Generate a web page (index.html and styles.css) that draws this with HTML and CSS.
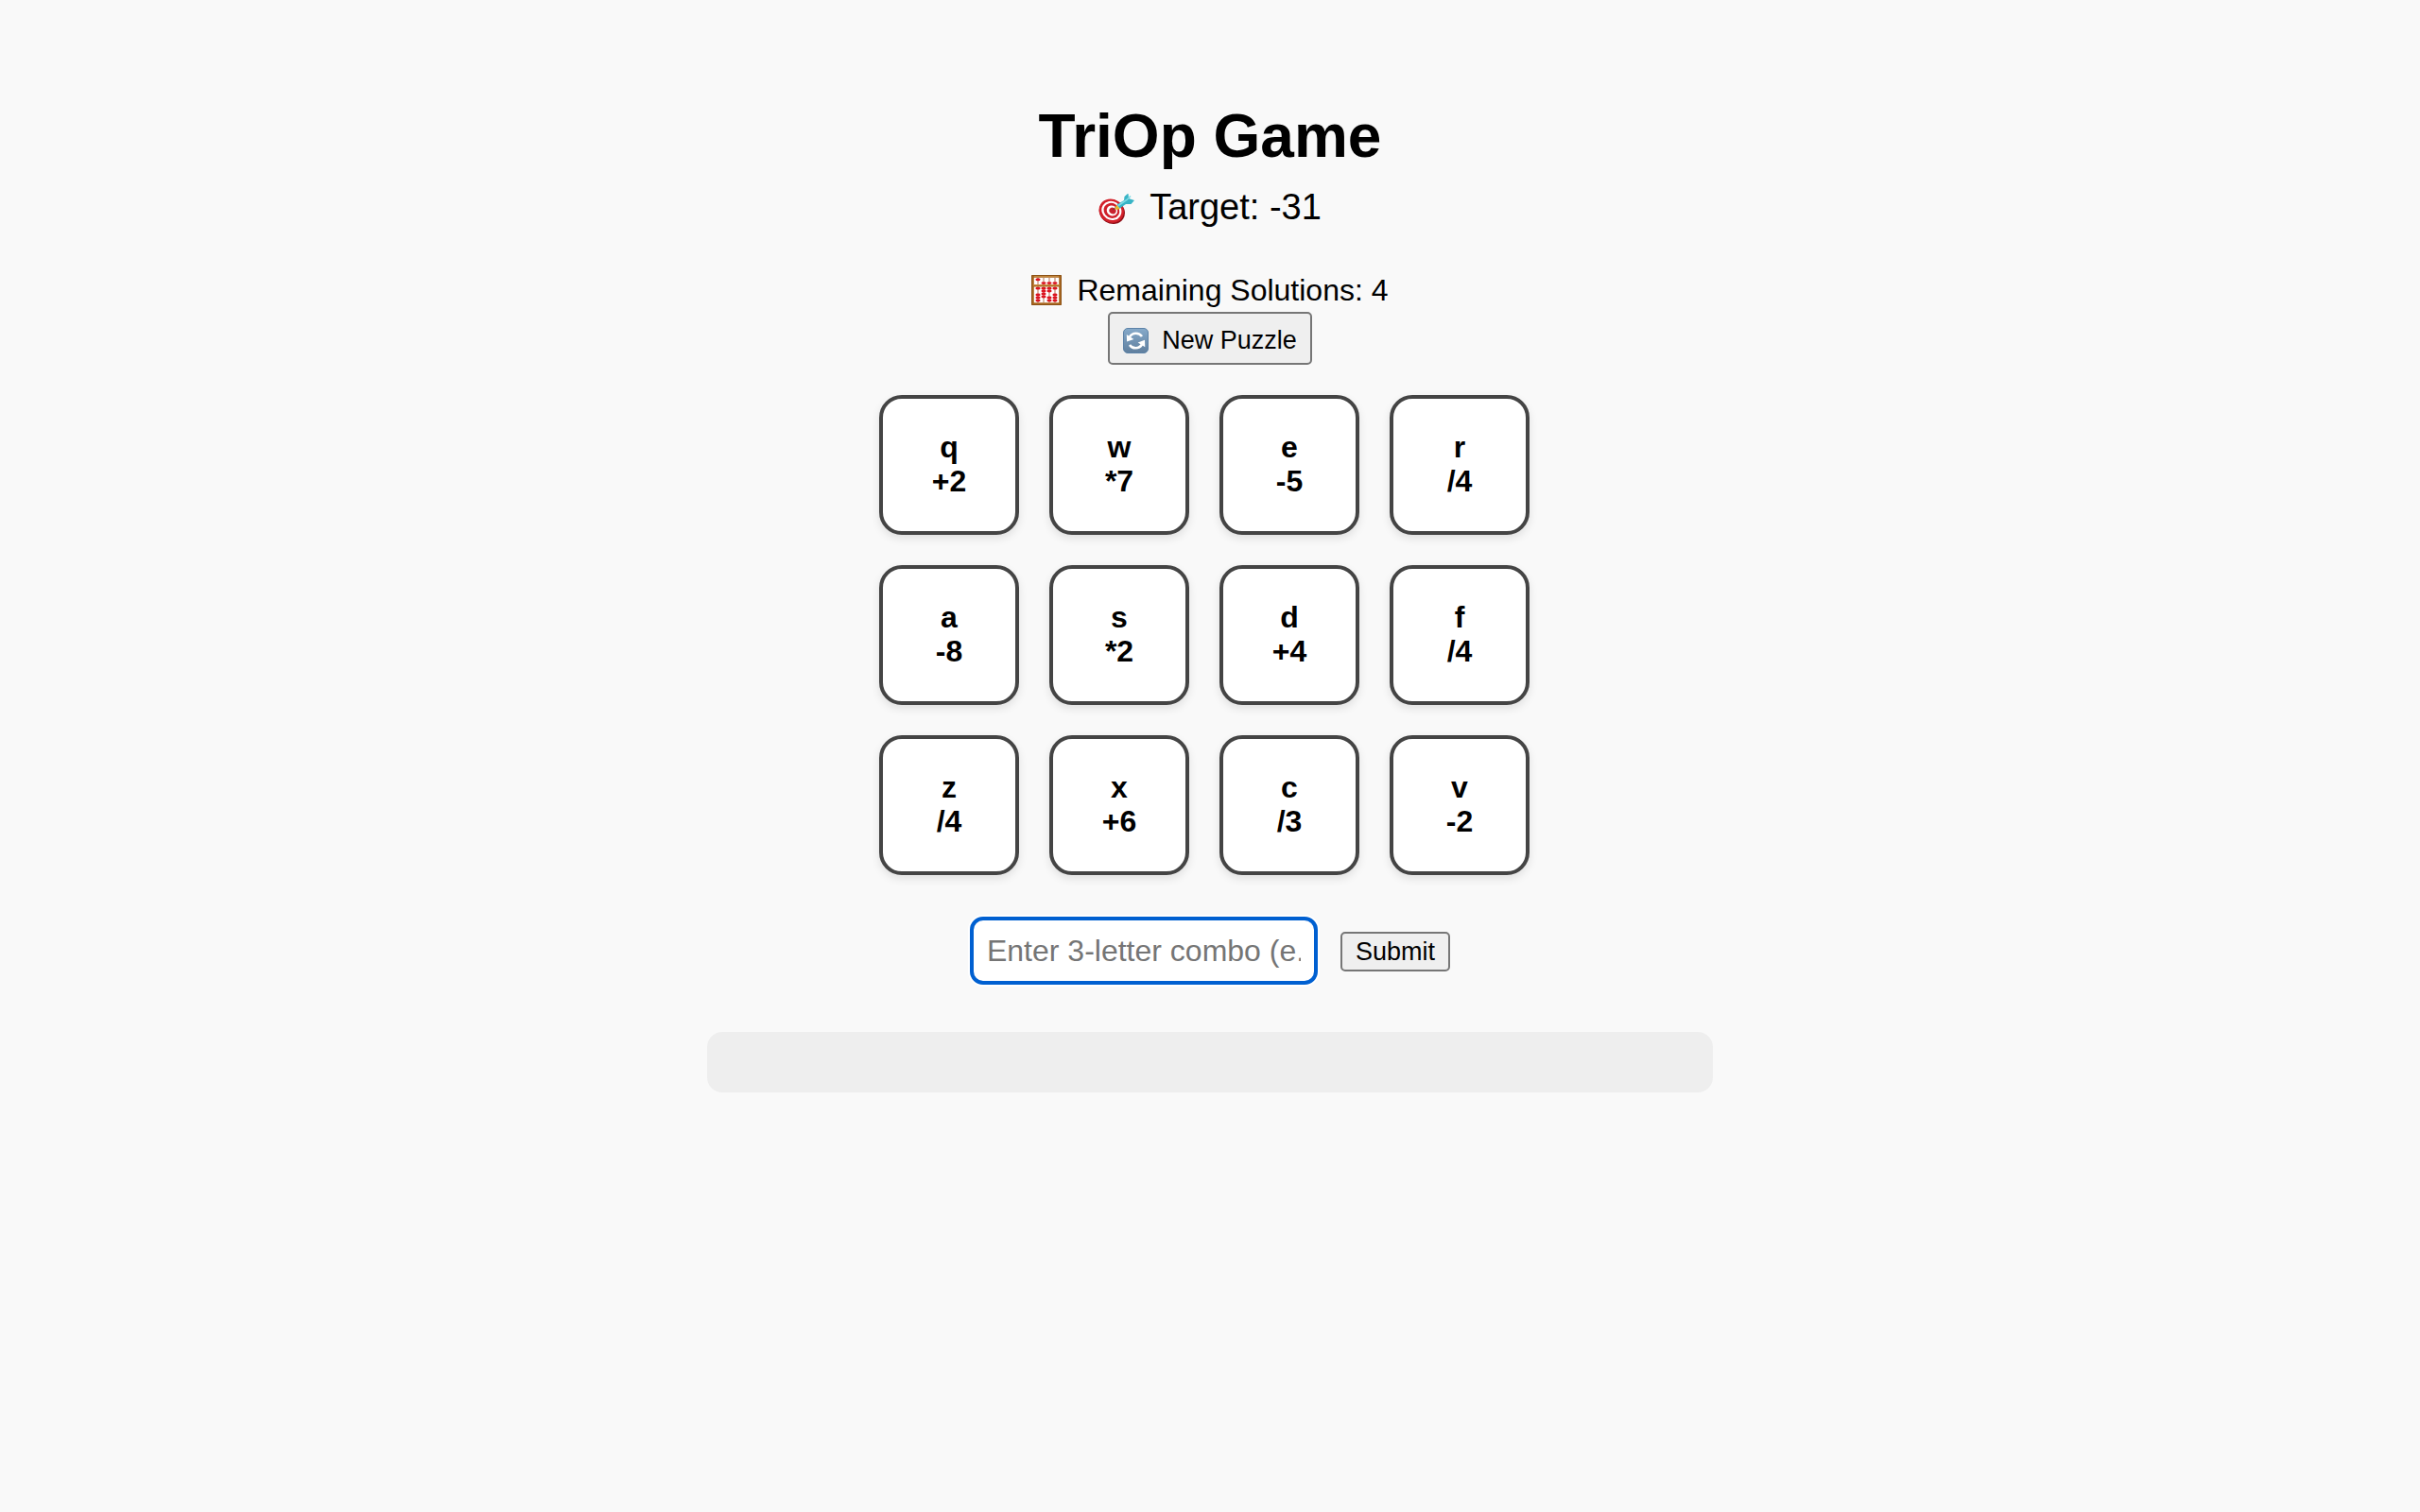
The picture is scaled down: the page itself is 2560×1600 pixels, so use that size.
FILE: index.html
```html
<!DOCTYPE html>
<html lang="en">
<head>
<meta charset="utf-8">
<title>TriOp Game</title>
<link rel="stylesheet" href="styles.css">
</head>
<body>
<main class="game">
  <h1 class="title">TriOp Game</h1>
  <p class="target">
    <svg class="icon-target" viewBox="0 0 38 32" aria-hidden="true">
      <g transform="rotate(32 13.500 18.500)">
        <ellipse cx="14.500" cy="18.500" rx="14" ry="12.500" fill="#8f1018"/>
        <ellipse cx="13.500" cy="18" rx="13.500" ry="12.300" fill="#d3202a"/>
        <ellipse cx="13.500" cy="17.800" rx="10.800" ry="9.800" fill="#fff"/>
        <ellipse cx="13.500" cy="17.800" rx="8.600" ry="7.800" fill="#cf202a"/>
        <ellipse cx="14" cy="17.500" rx="5.900" ry="5.300" fill="#fff"/>
        <ellipse cx="14.500" cy="17.300" rx="3.700" ry="3.300" fill="#c8222d"/>
      </g>
      <path d="M15 17l5-4" stroke="#6b3a3a" stroke-width="1"/>
      <path d="M17.500 16l1.500-4 4 3.500-3 1.500z" fill="#e9b928"/>
      <path d="M19.500 11.500l7.500-4.500.500-4 4-3.500.500 5.500 6 2-3.500 4-5.500 0-6.500 4.500z" fill="#38b4c6"/>
      <path d="M21 12.500l9-6 4-4" stroke="#7fdbe4" stroke-width="1.600" fill="none"/>
    </svg>
    <span>Target: -31</span>
  </p>
  <p class="remaining">
    <svg class="icon-abacus" viewBox="0 0 32 32" aria-hidden="true">
      <path fill="#fff" d="M1 1h30v30H1z"/>
      <path d="M7 3v26M13 3v26M19 3v26M25 3v26" stroke="#c58b72" stroke-width="1.200"/>
      <g fill="#dc1420">
        <ellipse cx="7" cy="4.800" rx="2.600" ry="1.500"/>
        <ellipse cx="13" cy="8.600" rx="2.600" ry="1.300"/>
        <ellipse cx="19" cy="8.600" rx="2.600" ry="1.300"/>
        <ellipse cx="25" cy="8.600" rx="2.600" ry="1.300"/>
        <ellipse cx="7" cy="14.200" rx="2.600" ry="1.400"/>
        <ellipse cx="13" cy="14.200" rx="2.600" ry="1.400"/>
        <ellipse cx="19" cy="14.200" rx="2.600" ry="1.400"/>
        <ellipse cx="25" cy="14.200" rx="2.600" ry="1.400"/>
        <ellipse cx="13" cy="17" rx="2.600" ry="1.400"/>
        <ellipse cx="19" cy="17" rx="2.600" ry="1.400"/>
        <ellipse cx="13" cy="20" rx="2.600" ry="1.400"/>
        <ellipse cx="7" cy="21" rx="2.600" ry="1.400"/>
        <ellipse cx="25" cy="21" rx="2.600" ry="1.400"/>
        <ellipse cx="13" cy="23" rx="2.600" ry="1.400"/>
        <ellipse cx="7" cy="24" rx="2.600" ry="1.400"/>
        <ellipse cx="19" cy="24" rx="2.600" ry="1.400"/>
        <ellipse cx="25" cy="24" rx="2.600" ry="1.400"/>
        <ellipse cx="7" cy="27" rx="2.600" ry="1.400"/>
        <ellipse cx="19" cy="27" rx="2.600" ry="1.400"/>
        <ellipse cx="25" cy="27" rx="2.600" ry="1.400"/>
      </g>
      <path d="M1.500 1.500h29v29h-29zM2 11.200h28" fill="none" stroke="#a9671f" stroke-width="2.600"/>
      <path d="M2 10.700h28M3 1.200h26" stroke="#d0944a" stroke-width="1"/>
      <path d="M.500.500h31v31H.500z" fill="none" stroke="#8c5217" stroke-width="1"/>
    </svg>
    <span>Remaining Solutions: 4</span>
  </p>
  <button class="button new-puzzle" type="button">
    <svg class="icon-refresh" viewBox="0 0 27 27" aria-hidden="true">
      <defs>
        <linearGradient id="tile-blue" x1="0" y1="0" x2="0" y2="1">
          <stop offset="0" stop-color="#86aaca"/>
          <stop offset="1" stop-color="#5f7e9d"/>
        </linearGradient>
      </defs>
      <rect x=".500" y=".500" width="26" height="26" rx="4.500" fill="url(#tile-blue)" stroke="#5d83a8"/>
      <path d="M7 9.500C10 4.500 17 4.500 20 9M20 17.500C17 22.500 10 22.500 7 18" fill="none" stroke="#fff" stroke-width="2.500"/>
      <path d="M3.800 7l.3 7.500 7.300-2.600zM23.300 20.200l-.3-7.500-7.300 2.800z" fill="#fff"/>
    </svg>
    <span>New Puzzle</span>
  </button>

  <div class="grid">
    <div class="tile"><span>q</span><span>+2</span></div>
    <div class="tile"><span>w</span><span>*7</span></div>
    <div class="tile"><span>e</span><span>-5</span></div>
    <div class="tile"><span>r</span><span>/4</span></div>
    <div class="tile"><span>a</span><span>-8</span></div>
    <div class="tile"><span>s</span><span>*2</span></div>
    <div class="tile"><span>d</span><span>+4</span></div>
    <div class="tile"><span>f</span><span>/4</span></div>
    <div class="tile"><span>z</span><span>/4</span></div>
    <div class="tile"><span>x</span><span>+6</span></div>
    <div class="tile"><span>c</span><span>/3</span></div>
    <div class="tile"><span>v</span><span>-2</span></div>
  </div>

  <form class="entry">
    <input class="combo" type="text" aria-label="Three-letter combo" placeholder="Enter 3-letter combo (e.g. qwe)">
    <button class="button submit" type="submit">Submit</button>
  </form>

  <div class="log"></div>
</main>
</body>
</html>
```

FILE: styles.css
```css
* {
  box-sizing: border-box;
}

body {
  margin: 0;
  background: #f9f9f9;
  color: #000;
  font-family: "Liberation Sans", Arial, Helvetica, sans-serif;
}

.game {
  display: flex;
  flex-direction: column;
  align-items: center;
  max-width: 1064px;
  margin: 0 auto;
  padding: 107px 0;
}

.title {
  margin: 0 0 16px;
  font-size: 64px;
  line-height: 74px;
}

.target,
.remaining {
  display: flex;
  align-items: center;
  gap: 16px;
  margin: 0;
}

.target {
  margin-bottom: 48px;
  font-size: 38px;
  line-height: 44px;
}

.remaining {
  margin-bottom: 5px;
  font-size: 32px;
  line-height: 36px;
}

.icon-target {
  width: 38px;
  height: 32px;
  margin-top: 3px;
}

.icon-abacus {
  width: 32px;
  height: 32px;
}

.icon-refresh {
  width: 27px;
  height: 27px;
}

.button {
  display: flex;
  align-items: center;
  gap: 14px;
  padding: 4px 14px 3px;
  border: 2px solid #767676;
  border-radius: 5px;
  background: #efefef;
  color: #000;
  font-family: inherit;
  font-size: 27px;
  line-height: 31px;
}

.new-puzzle {
  height: 56px;
  padding-top: 7px;
}

.submit {
  margin-top: 2px;
}

.grid {
  display: grid;
  grid-template-columns: repeat(4, 148px);
  gap: 32px;
  width: 700px;
  margin: 32px 0 44px;
}

.tile {
  display: flex;
  flex-direction: column;
  align-items: center;
  justify-content: center;
  height: 148px;
  padding-bottom: 2px;
  border: 4px solid #444;
  border-radius: 24px;
  background: #fff;
  box-shadow: 0 4px 10px rgba(0, 0, 0, 0.1);
  font-size: 32px;
  font-weight: bold;
  line-height: 36px;
}

.entry {
  display: flex;
  align-items: center;
  gap: 24px;
  margin-bottom: 50px;
}

.combo {
  width: 368px;
  height: 72px;
  padding: 0 14px;
  border: 4px solid #0060d1;
  border-radius: 14px;
  outline: none;
  background: #fff;
  box-shadow: 0 0 0 2px #fff;
  font-family: inherit;
  font-size: 32px;
}

.combo::placeholder {
  color: #757575;
  opacity: 1;
}

.log {
  width: 100%;
  min-height: 64px;
  border-radius: 16px;
  background: #eee;
}
```
